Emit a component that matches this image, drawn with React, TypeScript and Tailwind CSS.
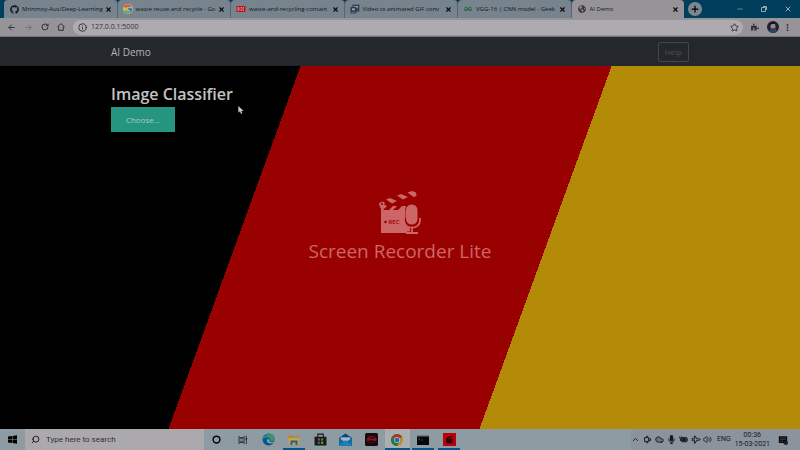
import type { ReactNode } from "react";
import { FaGithub, FaPuzzlePiece, FaGlobeAmericas, FaMicrophone } from "react-icons/fa";
import { FcGoogle } from "react-icons/fc";
import { SiGeeksforgeeks } from "react-icons/si";
import {
  ArrowLeft,
  ArrowRight,
  RotateCw,
  Info,
  Star,
  EllipsisVertical,
  X,
  Plus,
  Minus,
  Search,
  ChevronUp,
  Cloud,
  Plane,
  Volume2,
} from "lucide-react";

type Tab = { title: string; icon: ReactNode; active?: boolean };

const tabs: Tab[] = [
  { title: "Mrinmoy-Aus/Deep-Learning", icon: <FaGithub className="size-[9px] text-[#14181d]" /> },
  { title: "waste reuse and recycle - Go", icon: <FcGoogle className="size-2.5 rounded-full bg-[#a9adb2]" /> },
  {
    title: "waste-and-recycling-contain",
    icon: (
      <svg viewBox="0 0 18 12" className="h-1.5 w-2.5">
        <rect width="18" height="12" fill="#b8141c" />
        <path d="M3 3v6h2V3zM8 3h3M8 6h3M8 9h3M15 3h-2v6h2" stroke="#d8c6c8" strokeWidth="1.3" fill="none" />
      </svg>
    ),
  },
  {
    title: "Video to animated GIF conv",
    icon: (
      <svg viewBox="0 0 16 16" className="size-2.5">
        <path d="M4 1h11v11H4z" fill="#303a46" />
        <path d="M6 3h7v4H6z" fill="#7e93aa" />
        <path d="M1 5h9v10H1z" fill="#25303c" />
        <path d="M3 7h5v3H3z" fill="#9dacbc" />
        <path d="M2 12h7v2H2z" fill="#51718f" />
        <path d="M11 9h3v4h-3z" fill="#42566b" />
      </svg>
    ),
  },
  { title: "VGG-16 | CNN model - Geek", icon: <SiGeeksforgeeks className="size-2 text-[#1d6c38]" /> },
  { title: "AI Demo", icon: <FaGlobeAmericas className="size-2 text-[#35373a]" />, active: true },
];

function BrowserTab({ title, icon, active }: Tab) {
  return (
    <div
      className={
        active
          ? "flex h-full min-w-0 flex-1 items-center gap-[3px] rounded-t bg-[#979499] px-[5px]"
          : "flex h-full min-w-0 flex-1 items-center gap-[3px] rounded-t border-r border-[#59636c] bg-[#77838d] px-[5px]"
      }
    >
      <span className="flex w-2.5 shrink-0 justify-center">{icon}</span>
      <span className="min-w-0 flex-1 text-[6px] leading-[10px] whitespace-nowrap text-[#14181c]">
        {title}
      </span>
      <button aria-label={"Close " + title} className="shrink-0 text-[#0c0e10]">
        <X className="size-[7px]" strokeWidth={4} />
      </button>
    </div>
  );
}

function BrowserChrome() {
  return (
    <header className="bg-[#979499]">
      <div className="flex h-[18px] items-center bg-[#003e5c] pl-1">
        <div className="flex h-full w-[680px] min-w-0 items-center">
          {tabs.map((tab) => (
            <BrowserTab key={tab.title} {...tab} />
          ))}
        </div>
        <button aria-label="New tab" className="ml-1 flex size-3.5 items-center justify-center rounded-full bg-[#7c8890] text-black">
          <Plus className="size-2.5" strokeWidth={3} />
        </button>
        <div className="ml-auto flex items-center gap-4 pr-2 text-[#9ba7af]">
          <button aria-label="Minimize"><Minus className="size-2" strokeWidth={2} /></button>
          <button aria-label="Restore">
            <svg viewBox="0 0 8 8" className="size-2" fill="none" stroke="currentColor">
              <path d="M1.500 2.500h4v4h-4zM3 1.500h3.500V5" />
            </svg>
          </button>
          <button aria-label="Close window"><X className="size-2" strokeWidth={3} /></button>
        </div>
      </div>
      <div className="flex h-[19px] items-center border-b border-[#777578] pr-2 pl-[7px] text-[#303235]">
        <div className="flex items-center gap-2">
          <button aria-label="Back"><ArrowLeft className="size-[9px]" strokeWidth={2.5} /></button>
          <button aria-label="Forward" className="text-[#737176]"><ArrowRight className="size-[9px]" strokeWidth={2.5} /></button>
          <button aria-label="Reload"><RotateCw className="size-2" strokeWidth={3} /></button>
          <button aria-label="Home">
            <svg viewBox="0 0 24 24" className="size-2" fill="none" stroke="currentColor" strokeWidth="3">
              <path d="M1 12 12 2l11 10M5 10v12h14V10" />
            </svg>
          </button>
        </div>
        <div className="ml-2 flex h-[15px] min-w-0 flex-1 items-center gap-1 rounded-full bg-[#aeabb0] pr-1 pl-[5px]">
          <Info className="size-[9px] shrink-0" strokeWidth={2.5} />
          <input
            aria-label="Address"
            defaultValue="127.0.0.1:5000"
            className="min-w-0 flex-1 bg-transparent text-[7px] leading-3 text-[#303236] outline-none"
          />
          <Star className="size-[9px] shrink-0" strokeWidth={2.5} />
        </div>
        <button aria-label="Extensions" className="ml-2"><FaPuzzlePiece className="size-2" /></button>
        <button aria-label="Profile" className="ml-2">
          <svg viewBox="0 0 24 24" className="size-3">
            <circle cx="12" cy="12" r="12" fill="#182238" />
            <path d="M4 21c1-5 4-7 8-7s7 2 8 7c-5 4-11 4-16 0z" fill="#25466e" />
            <ellipse cx="12" cy="11" rx="5" ry="7" fill="#a68078" />
            <path d="M6 9c0-8 12-8 12 0l-2-3H9z" fill="#10131c" />
            <path d="M8 14q4 2 8 0v2q-4 4-8 0z" fill="#272229" />
          </svg>
        </button>
        <button aria-label="Browser menu" className="ml-1"><EllipsisVertical className="size-[9px]" strokeWidth={3} /></button>
      </div>
    </header>
  );
}

function RecorderMark() {
  return (
    <div className="mt-[59px] flex flex-col items-center text-[#cd6666]">
      <svg viewBox="0 0 44 44" className="size-11">
        <path d="m1 12 4-1.500 2 1.500-1 1.500L9 15l-6 2.500L1.500 15z" fill="currentColor" />
        <path d="m8 8.500 4-1.500 7 3-5 2.500zM19 4.500l4-1.500 7 3-5 2.500zM29.500 1.500l5-1.500 3.500 1.500.5 3.500-3 1z" fill="currentColor" />
        <circle cx="4" cy="13" r="1" fill="#990000" />
        <path d="M3 19v23h26v-1.500h3v-3c-3-1-6-3.500-6-7.500v-3h1.500v-8z" fill="currentColor" />
        <path d="M3 19v-2l2-2h4l-4 4zM11 19l4-4h4l-4 4zM20 19l4-4h4l-1 4z" fill="currentColor" />
        <rect x="28" y="13.500" width="11.500" height="20" rx="5.500" fill="currentColor" />
        <path d="M26 27v2.500c0 9.500 16 9.500 16 0V27M34 37v4M28 42h12" fill="none" stroke="currentColor" strokeWidth="1.800" />
        <circle cx="7.500" cy="31" r="1.300" fill="#990000" />
        <text x="10.500" y="33" fontSize="6" fontWeight="600" fill="#990000">REC</text>
      </svg>
      <p className="text-[19px] leading-8">Screen Recorder Lite</p>
    </div>
  );
}

function Cursor() {
  return (
    <svg viewBox="0 0 8 12" className="absolute top-[40px] left-[127px] h-2 w-[6px]">
      <path d="M0 0v10l2.500-2 1.500 4 2-1-1.500-3.500H8z" fill="#c9c9c9" />
    </svg>
  );
}

function DemoPage() {
  return (
    <main className="flex flex-1 flex-col bg-[linear-gradient(110deg,#000000_33%,#990000_33%,#990000_66%,#b38b08_66%)]">
      <nav className="h-[29px] bg-[#24282c]">
        <div className="mx-auto flex h-full w-[72.25%] items-center justify-between">
          <a href="#home" className="text-[10px] leading-4 text-[#b4b5b6]">AI Demo</a>
          <button className="h-5 rounded-xs border border-[#43474b] px-1.5 text-[8px] leading-3 text-[#4d5155]">Help</button>
        </div>
      </nav>
      <div className="relative mx-auto w-[72.25%] pt-4">
        <h1 className="text-[16px] leading-6 font-semibold text-[#c4c4c4]">Image Classifier</h1>
        <button className="mt-px block h-[25px] w-16 bg-[#26957f] text-[8px] text-[#a4cec6]">Choose...</button>
        <Cursor />
      </div>
      <RecorderMark />
    </main>
  );
}

function WindowsLogo() {
  return (
    <svg viewBox="0 0 18 18" className="size-[9px] text-black">
      <path d="m0 3 8-1v6H0zM9 1.800 18 .5V8H9zM0 9h8v7l-8-1zM9 9h9v8.500L9 16z" fill="currentColor" />
    </svg>
  );
}

const apps: { name: string; open?: boolean; active?: boolean; icon: ReactNode }[] = [
  { name: "Cortana", icon: <svg viewBox="0 0 24 24" className="size-[9px]"><circle cx="12" cy="12" r="9" fill="none" stroke="#07090b" strokeWidth="4" /></svg> },
  {
    name: "Task view",
    icon: (
      <svg viewBox="0 0 24 24" className="size-[10px]" fill="none" stroke="#24292d" strokeWidth="2">
        <path d="M2 2v4h13V2M2 22v-4h13v4M2 9h13v6H2zM20 2v20" />
        <path d="M18 7h4v4h-4z" fill="#24292d" stroke="none" />
      </svg>
    ),
  },
  {
    name: "Edge",
    icon: (
      <svg viewBox="0 0 24 24" className="size-[13px]">
        <circle cx="12" cy="12" r="11" fill="#07568e" />
        <path d="M1 12C2-2 23-2 23 10c0 5-6 7-9 4 2-5-5-9-13-2z" fill="#23898f" />
        <path d="M12 1c8 0 12 5 11 10s-7 5-9 3c2-3 0-6-5-7z" fill="#37946a" />
        <path d="M10 11c-3 5 2 10 11 7 2-1 1-2 0-2-4 2-9 0-8-4z" fill="#93a3b0" />
      </svg>
    ),
  },
  {
    name: "File Explorer",
    open: true,
    icon: (
      <svg viewBox="0 0 24 24" className="size-3">
        <path d="M1 2h8l2 3h12v16H1z" fill="#b08b34" />
        <path d="M1 8h22v14H1z" fill="#c2a454" />
        <path d="M5 22v-9h14v9h-4v-5H9v5z" fill="#1c6391" />
      </svg>
    ),
  },
  {
    name: "Store",
    icon: (
      <svg viewBox="0 0 24 24" className="size-[13px]">
        <path d="M7 8V2h10v6" fill="none" stroke="#17191b" strokeWidth="2" />
        <path d="M1 7h22v15q0 1-1 1H2q-1 0-1-1z" fill="#17191b" />
        <path d="M7 10h4v4H7z" fill="#b44427" /><path d="M13 10h4v4h-4z" fill="#599020" />
        <path d="M7 16h4v4H7z" fill="#127aac" /><path d="M13 16h4v4h-4z" fill="#b18e1a" />
      </svg>
    ),
  },
  {
    name: "Mail",
    icon: (
      <svg viewBox="0 0 24 24" className="size-[13px]">
        <path d="M0 9 12 1l12 8v14H0z" fill="#07457e" />
        <path d="M3 8h18v9H3z" fill="#b0b8be" />
        <path d="m0 9 12 8 12-8v14H0z" fill="#126ba4" />
        <path d="m0 23 12-10 12 10z" fill="#1a83b9" />
      </svg>
    ),
  },
  {
    name: "Racing game",
    icon: (
      <svg viewBox="0 0 24 24" className="size-[13px]">
        <rect width="24" height="24" rx="3" fill="#160b0e" />
        <path d="M3 11 8 6h9l5 5-3 4-7-2-8 2z" fill="#8f141c" />
        <path d="m8 10 2-2h6l2 2zM5 18l14-1" stroke="#50191e" />
      </svg>
    ),
  },
  {
    name: "Chrome",
    open: true,
    active: true,
    icon: (
      <svg viewBox="0 0 24 24" className="size-3">
        <circle cx="12" cy="12" r="12" fill="#b69424" />
        <path d="M12 12 1.600 6A12 12 0 0 1 22.400 6z" fill="#a9362b" />
        <path d="M12 12 1.600 6A12 12 0 0 0 12 24l5-9z" fill="#1b7b43" />
        <circle cx="12" cy="12" r="6" fill="#b8bcbd" /><circle cx="12" cy="12" r="4.500" fill="#2c65a9" />
      </svg>
    ),
  },
  {
    name: "Command Prompt",
    open: true,
    icon: (
      <svg viewBox="0 0 24 20" className="h-2.5 w-3">
        <path d="M0 0h24v20H0z" fill="#050708" /><path d="M0 0h24v3H0z" fill="#73787c" />
        <path d="m3 6 3 2-3 2M8 10h4" stroke="#6c7073" fill="none" />
      </svg>
    ),
  },
  {
    name: "Screen Recorder",
    open: true,
    icon: (
      <svg viewBox="0 0 24 24" className="size-[13px]">
        <path d="M0 0h24v24H0z" fill="#bc0007" />
        <path d="m6 8 11-3 1 2-11 3zM6 10h11v9H6z" fill="#260306" />
        <path d="M16 10h3v7h-3z" fill="#50050a" />
      </svg>
    ),
  },
];

function Taskbar() {
  return (
    <footer className="flex h-[21px] items-stretch bg-[#8f9ba3] text-[#15191c]">
      <button aria-label="Start" className="flex w-[25px] items-center justify-center"><WindowsLogo /></button>
      <label className="flex w-[179px] items-center gap-1.5 bg-[#aca9ad] pl-1.5">
        <Search className="size-[9px] -scale-x-100" strokeWidth={2.5} />
        <input
          aria-label="Search Windows"
          placeholder="Type here to search"
          className="min-w-0 flex-1 bg-transparent font-[Roboto,sans-serif] text-[8px] leading-3 outline-none placeholder:text-[#303236]"
        />
      </label>
      <div className="grid w-[258px] grid-cols-10">
        {apps.map((app) => (
          <button
            key={app.name}
            aria-label={app.name}
            className={
              app.active
                ? "flex items-center justify-center border-b-2 border-[#07548a] bg-[#aaaeb3] pt-0.5"
                : app.open
                  ? "mx-0.5 flex items-center justify-center border-b-2 border-[#07548a] pt-0.5"
                  : "flex items-center justify-center"
            }
          >
            {app.icon}
          </button>
        ))}
      </div>
      <div className="ml-auto flex items-center bg-[#8b939c] pr-3 font-[Roboto,sans-serif] text-[7px]">
        <div className="flex items-center gap-[3px]">
          <ChevronUp className="size-[9px]" strokeWidth={2.5} />
          <svg viewBox="0 0 24 24" className="size-[9px]" fill="none" stroke="currentColor" strokeWidth="2.500">
            <path d="M4 7h11v10H4zM7 7q1-5 7-4M7 17q1 5 7 4M15 10h5v5h-5" />
          </svg>
          <Cloud className="size-[9px]" fill="#6f777e" strokeWidth={2.5} />
          <FaMicrophone className="size-[9px]" />
          <svg viewBox="0 0 24 24" className="size-[9px]" fill="none" stroke="currentColor" strokeWidth="2.500">
            <path d="M7 7h14v11H7zM22 10v5M2 4v5h5V4M4 9v7" />
            <path d="M10 9h7v7h-7z" fill="currentColor" />
          </svg>
          <Plane className="size-[9px] rotate-45" strokeWidth={2.5} />
          <Volume2 className="size-[9px]" strokeWidth={2} />
          <span className="pl-0.5">ENG</span>
        </div>
        <div className="ml-1 text-center leading-[9px]">
          <p>00:36</p>
          <p>15-03-2021</p>
        </div>
        <button aria-label="Notifications" className="ml-2">
          <svg viewBox="0 0 24 24" className="size-2.5">
            <path d="M2 3h20v16h-6v4l-4-4H2z" fill="#090b0e" />
            <path d="M5 7h14M5 11h14M5 15h7" stroke="#4c535a" strokeWidth="1.500" />
            <circle cx="19" cy="19" r="5" fill="#1b2025" />
          </svg>
        </button>
      </div>
    </footer>
  );
}

export default function App() {
  return (
    <div className="flex min-h-screen flex-col overflow-hidden font-['Open_Sans','Noto_Sans',sans-serif]">
      <BrowserChrome />
      <DemoPage />
      <Taskbar />
    </div>
  );
}
